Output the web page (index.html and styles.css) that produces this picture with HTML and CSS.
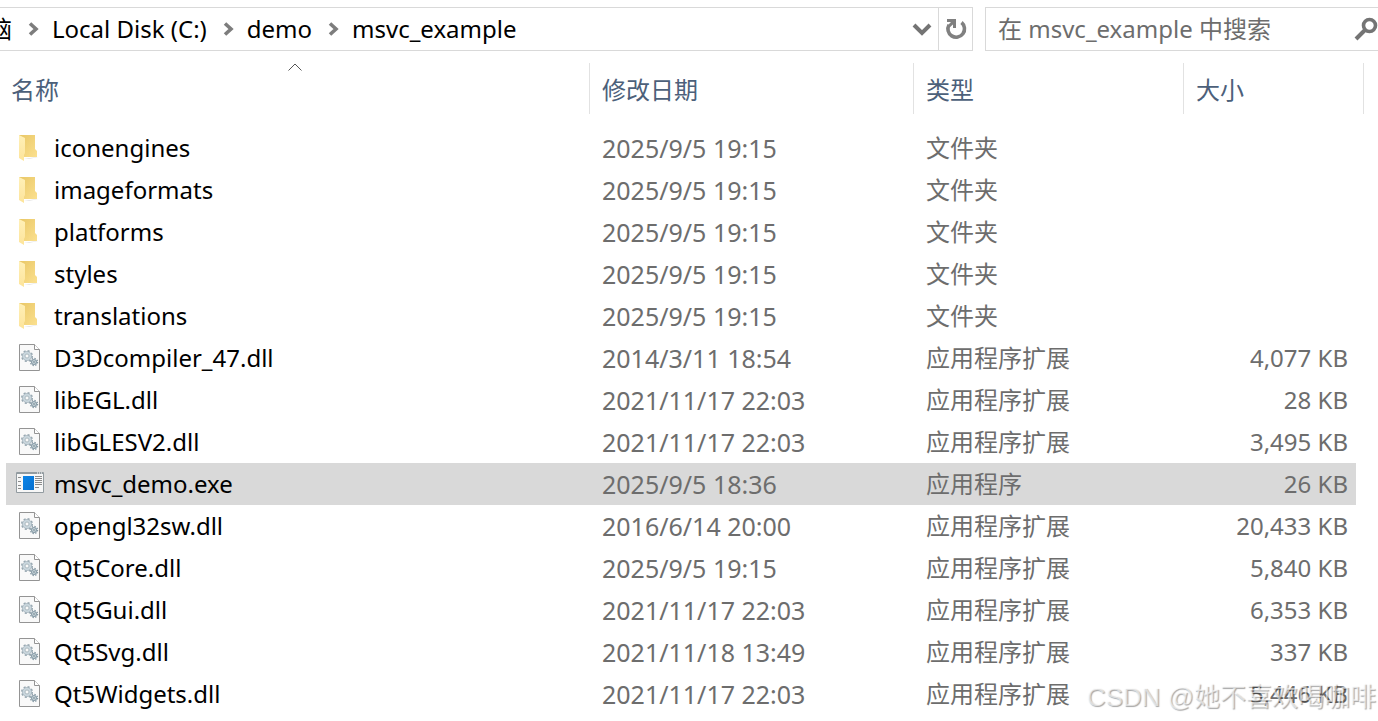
FILE: index.html
```
<!DOCTYPE html>
<html lang="zh-CN">
<head>
<meta charset="utf-8">
<title>msvc_example</title>
<link rel="stylesheet" href="styles.css">
</head>
<body>
<svg class="sprites" aria-hidden="true">
  <defs>
    <linearGradient id="fold-back" x1="0" y1="0" x2="1" y2="1"><stop offset="0" stop-color="#e9c766"/><stop offset="1" stop-color="#fbe08f"/></linearGradient>
    <linearGradient id="fold-front" x1="0" y1="0" x2="0" y2="1"><stop offset="0" stop-color="#fff0b8"/><stop offset="1" stop-color="#fde49a"/></linearGradient>
    <linearGradient id="blue" x1="0" y1="0" x2="1" y2="1"><stop offset="0" stop-color="#0a84e8"/><stop offset="1" stop-color="#0870cf"/></linearGradient>
  </defs>
  <symbol id="folder" viewBox="0 0 28 28">
    <path d="M8 25l12-2h2l-9 2z" fill="#e4e4e4"/>
    <path d="M3 1h16v14l2 2v6H6z" fill="url(#fold-back)"/>
    <path d="M3 1l6 3v15l-1 2v6l-5-3z" fill="url(#fold-front)"/>
  </symbol>
  <symbol id="dll" viewBox="0 0 28 28">
    <path d="M3.500.5h15l5 5v21h-20z" fill="#f9f9f9" stroke="#949494"/>
    <path d="M18.500.5v5h5" fill="#fff" stroke="#949494"/>
    <circle cx="11" cy="12" r="5.200" fill="none" stroke="#98a8b1" stroke-width="1.600" stroke-dasharray="2.040 2.040"/>
    <circle cx="11" cy="12" r="3.400" fill="none" stroke="#c9d6dd" stroke-width="2.400"/>
    <circle cx="11" cy="12" r="4.600" fill="none" stroke="#98a8b1" stroke-width=".6"/>
    <circle cx="11" cy="12" r="2" fill="#f9f9f9" stroke="#98a8b1" stroke-width=".8"/>
    <circle cx="18" cy="18" r="3.600" fill="none" stroke="#8497a2" stroke-width="1.200" stroke-dasharray="1.410 1.410"/>
    <circle cx="18" cy="18" r="2.400" fill="#dfe8ec" stroke="#8ea1ac" stroke-width="1.400"/>
    <circle cx="18" cy="18" r=".9" fill="#7b8f9a"/>
  </symbol>
  <symbol id="exe" viewBox="0 0 28 28">
    <path d="M.5 2.500h27v20H.5z" fill="#f7f7f7" stroke="#929ba0"/>
    <path d="M1 2h26v2H1z" fill="#929ba0"/>
    <path d="M21 3h1m1 0h1m1 0h1" stroke="#fff"/>
    <path d="M7 6h11v14H7z" fill="url(#blue)"/>
    <path d="M2 7.500h3m-3 4h3m-3 4h3m-3 3h3M19 6.500h7m-7 2h7m-7 2h7m-7 2h7m-7 2h7m-7 3h4" stroke="#8b8b8b"/>
  </symbol>
  <symbol id="crumb" viewBox="0 0 12 16"><path d="M2 2.500l6 5.500-6 5.500" fill="none" stroke="#7d7d7d" stroke-width="3.600"/></symbol>
</svg>

<header class="toolbar">
  <nav class="address" aria-label="地址">
    <a class="crumb crumb-cut" href="#">脑</a>
    <svg class="sep"><use href="#crumb"/></svg>
    <a class="crumb" href="#">Local Disk (C:)</a>
    <svg class="sep"><use href="#crumb"/></svg>
    <a class="crumb" href="#">demo</a>
    <svg class="sep"><use href="#crumb"/></svg>
    <a class="crumb" href="#">msvc_example</a>
    <button class="tool history" aria-label="历史"><svg width="20" height="14" viewBox="0 0 20 14"><path d="M2 3l8 8 8-8" fill="none" stroke="#747474" stroke-width="4"/></svg></button>
    <button class="tool refresh" aria-label="刷新"><svg width="22" height="24" viewBox="0 0 22 24"><path d="M16.500 5.500A8.300 8.300 0 1 1 4 7.800" fill="none" stroke="#808080" stroke-width="3.600"/><path d="M2 2h9v9H8V7.500L5 10 3 8l3-3H2z" fill="#808080"/></svg></button>
  </nav>
  <form class="search">
    <input class="search-box" type="search" aria-label="搜索" placeholder="在 msvc_example 中搜索">
    <button class="tool find" type="button" aria-label="开始搜索"><svg width="24" height="24" viewBox="0 0 24 24"><circle cx="15.500" cy="8.500" r="6" fill="none" stroke="#747474" stroke-width="3.600"/><path d="M11 13l-9 9" stroke="#747474" stroke-width="4"/></svg></button>
  </form>
</header>

<main class="files">
<table class="list">
  <colgroup><col><col class="col-date"><col class="col-type"><col class="col-size"><col class="col-end"></colgroup>
  <thead>
    <tr>
      <th aria-sort="ascending"><button class="sort">名称</button><svg class="sort-mark" width="14" height="8" viewBox="0 0 14 8"><path d="M.5 7.500l6.500-6.500 6.500 6.500" fill="none" stroke="#555"/></svg></th>
      <th><button class="sort">修改日期</button></th>
      <th><button class="sort">类型</button></th>
      <th colspan="2"><button class="sort">大小</button></th>
    </tr>
  </thead>
  <tbody>
    <tr><td><span class="name"><svg class="icon"><use href="#folder"/></svg>iconengines</span></td><td>2025/9/5 19:15</td><td>文件夹</td><td></td></tr>
    <tr><td><span class="name"><svg class="icon"><use href="#folder"/></svg>imageformats</span></td><td>2025/9/5 19:15</td><td>文件夹</td><td></td></tr>
    <tr><td><span class="name"><svg class="icon"><use href="#folder"/></svg>platforms</span></td><td>2025/9/5 19:15</td><td>文件夹</td><td></td></tr>
    <tr><td><span class="name"><svg class="icon"><use href="#folder"/></svg>styles</span></td><td>2025/9/5 19:15</td><td>文件夹</td><td></td></tr>
    <tr><td><span class="name"><svg class="icon"><use href="#folder"/></svg>translations</span></td><td>2025/9/5 19:15</td><td>文件夹</td><td></td></tr>
    <tr><td><span class="name"><svg class="icon"><use href="#dll"/></svg>D3Dcompiler_47.dll</span></td><td>2014/3/11 18:54</td><td>应用程序扩展</td><td>4,077 KB</td></tr>
    <tr><td><span class="name"><svg class="icon"><use href="#dll"/></svg>libEGL.dll</span></td><td>2021/11/17 22:03</td><td>应用程序扩展</td><td>28 KB</td></tr>
    <tr><td><span class="name"><svg class="icon"><use href="#dll"/></svg>libGLESV2.dll</span></td><td>2021/11/17 22:03</td><td>应用程序扩展</td><td>3,495 KB</td></tr>
    <tr class="selected"><td><span class="name"><svg class="icon"><use href="#exe"/></svg>msvc_demo.exe</span></td><td>2025/9/5 18:36</td><td>应用程序</td><td>26 KB</td></tr>
    <tr><td><span class="name"><svg class="icon"><use href="#dll"/></svg>opengl32sw.dll</span></td><td>2016/6/14 20:00</td><td>应用程序扩展</td><td>20,433 KB</td></tr>
    <tr><td><span class="name"><svg class="icon"><use href="#dll"/></svg>Qt5Core.dll</span></td><td>2025/9/5 19:15</td><td>应用程序扩展</td><td>5,840 KB</td></tr>
    <tr><td><span class="name"><svg class="icon"><use href="#dll"/></svg>Qt5Gui.dll</span></td><td>2021/11/17 22:03</td><td>应用程序扩展</td><td>6,353 KB</td></tr>
    <tr><td><span class="name"><svg class="icon"><use href="#dll"/></svg>Qt5Svg.dll</span></td><td>2021/11/18 13:49</td><td>应用程序扩展</td><td>337 KB</td></tr>
    <tr><td><span class="name"><svg class="icon"><use href="#dll"/></svg>Qt5Widgets.dll</span></td><td>2021/11/17 22:03</td><td>应用程序扩展</td><td>5,446 KB</td></tr>
  </tbody>
</table>
<p class="watermark">CSDN @她不喜欢喝咖啡</p>
</main>
</body>
</html>
```
FILE: styles.css
```
* { box-sizing: border-box; }
body {
  margin: 0;
  background: #fff;
  color: #000;
  font: 24px/36px "Noto Sans", "Noto Sans CJK SC", sans-serif;
}
button, input { font: inherit; color: inherit; background: none; border: 0; padding: 0; margin: 0; }
.sprites { position: absolute; width: 0; height: 0; }

.toolbar { display: flex; gap: 12px; padding-top: 7px; }
.address {
  flex: 1;
  display: flex;
  align-items: center;
  height: 44px;
  overflow: hidden;
  border: 1px solid #d9d9d9;
  border-left: 0;
}
.crumb { color: inherit; text-decoration: none; white-space: nowrap; }
.crumb-cut { margin-left: -12px; }
.sep { width: 12px; height: 16px; margin: 0 12px 0 16px; flex: none; }
.tool { display: flex; align-items: center; justify-content: center; flex: none; }
.history { width: 32px; margin-left: auto; }
.refresh { width: 34px; height: 42px; border-left: 1px solid #d9d9d9; }
.search {
  display: flex;
  width: 393px;
  height: 44px;
  border: 1px solid #d9d9d9;
  border-right: 0;
}
.search-box { flex: 1; min-width: 0; padding-left: 12px; outline: 0; }
.search-box::placeholder { color: #6d6d6d; opacity: 1; }
.find { width: 24px; }

.files { position: relative; padding: 12px 14px 0 6px; }
.list { width: 100%; table-layout: fixed; border-collapse: separate; border-spacing: 0; }
.col-date { width: 324px; }
.col-type { width: 270px; }
.col-size { width: 172px; }
.col-end { width: 8px; }
th {
  position: relative;
  height: 51px;
  padding: 2px 0 0 12px;
  border-right: 1px solid #e2e2e2;
  text-align: left;
  font-weight: 400;
  color: #4c607a;
}
th:first-child { padding-left: 5px; }
.sort { display: block; }
.sort-mark { position: absolute; top: 0; left: 0; right: 6px; margin: 0 auto; }
thead::after { content: ""; display: block; height: 13px; }
td { height: 42px; padding: 0 0 0 12px; color: #6d6d6d; white-space: nowrap; }
td:first-child { padding-left: 10px; color: #000; }
td:nth-child(2) { font-size: 25px; }
td:nth-child(4) { padding: 0 8px 0 0; text-align: right; }
.selected td { background: #d9d9d9; }
.name { display: flex; align-items: center; gap: 10px; }
.icon { width: 28px; height: 28px; flex: none; }
.watermark {
  position: absolute;
  right: 2px;
  bottom: 0;
  margin: 0;
  color: rgba(255, 255, 255, .6);
  text-shadow: 1px 1px 1px rgba(0, 0, 0, .35);
  font-family: "Liberation Sans", "Noto Sans CJK SC", sans-serif;
  font-size: 26px;
}
```
